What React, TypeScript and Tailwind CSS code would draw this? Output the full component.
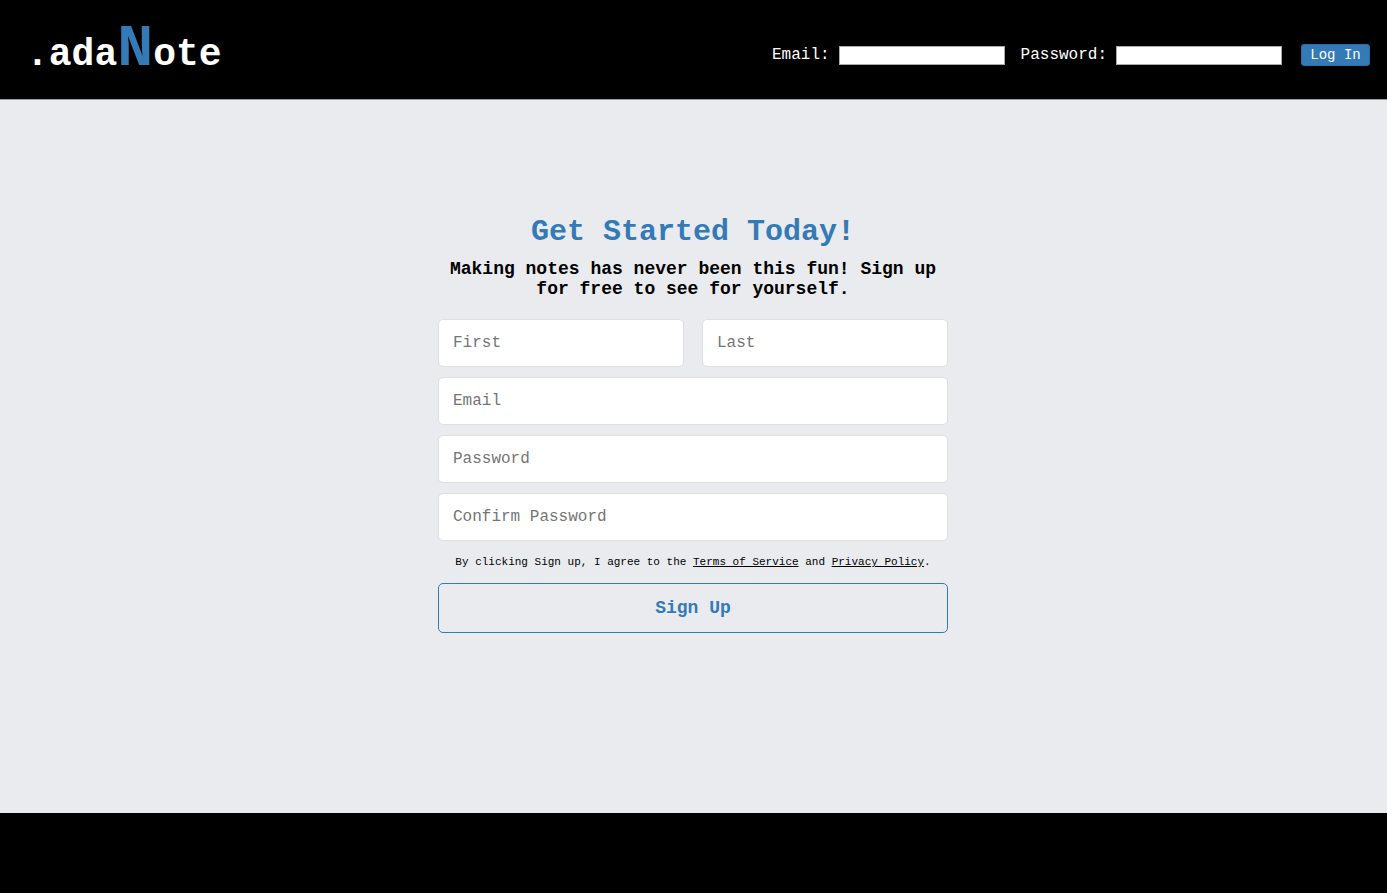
import React from "react";

const fieldClass =
  "h-12 w-full min-w-0 rounded-[5px] border border-[#dddfe2] bg-white px-3.5 text-base text-black placeholder:text-[#757575]";

type FieldProps = { label: string; name: string; type?: string };

function Field({ label, name, type = "text" }: FieldProps) {
  return <input className={fieldClass} type={type} name={name} placeholder={label} aria-label={label} />;
}

function LoginField({ label, name, type }: { label: string; name: string; type: string }) {
  const id = `login-${name}`;
  return (
    <div className="flex items-center gap-[9px]">
      <label htmlFor={id}>{label}</label>
      <input
        id={id}
        name={name}
        type={type}
        className="h-[19px] w-[166px] border border-[#a9a9a9] bg-white px-1 text-sm text-black"
      />
    </div>
  );
}

function Header() {
  return (
    <header className="flex h-[100px] items-center justify-between border-b border-[#9b9b9f] bg-black pt-[11px] pr-[17px] pl-[26px] text-white">
      <a href="#" className="flex items-baseline pb-3 text-[38px] leading-none font-bold">
        <span>.ada</span>
        <span className="text-[60px] leading-none text-[#337ab7]">N</span>
        <span>ote</span>
      </a>
      <form className="flex items-center gap-4" onSubmit={(e) => e.preventDefault()}>
        <LoginField label="Email:" name="email" type="email" />
        <LoginField label="Password:" name="password" type="password" />
        <button
          type="submit"
          className="ml-[3px] h-[22px] w-[69px] rounded-[3px] border border-[#2e6da4] bg-[#337ab7] text-sm leading-5 text-white"
        >
          Log In
        </button>
      </form>
    </header>
  );
}

export default function App() {
  return (
    <div className="flex min-h-screen flex-col bg-[#e9ebee] font-['Courier_New','Liberation_Mono',monospace] text-black">
      <Header />
      <main className="flex flex-1 flex-col items-center pt-[114px] pr-[17px] pb-16 pl-4">
        <section className="w-full max-w-[510px] text-center">
          <h1 className="text-[30px] leading-9 font-bold text-[#337ab7]">Get Started Today!</h1>
          <p className="mt-[9px] text-lg leading-5 font-bold">
            Making notes has never been this fun! Sign up for free to see for yourself.
          </p>
          <form className="mt-5 flex flex-col gap-2.5" onSubmit={(e) => e.preventDefault()}>
            <div className="grid grid-cols-2 gap-[18px]">
              <Field label="First" name="first" />
              <Field label="Last" name="last" />
            </div>
            <Field label="Email" name="email" type="email" />
            <Field label="Password" name="password" type="password" />
            <Field label="Confirm Password" name="confirm" type="password" />
            <p className="py-[3px] text-[11px] leading-4">
              By clicking Sign up, I agree to the{" "}
              <a href="#" className="underline">Terms of Service</a> and{" "}
              <a href="#" className="underline">Privacy Policy</a>.
            </p>
            <button
              type="submit"
              className="h-[50px] w-full rounded-[5px] border border-[#337ab7] text-lg font-bold text-[#337ab7]"
            >
              Sign Up
            </button>
          </form>
        </section>
      </main>
      <footer className="h-20 bg-black" />
    </div>
  );
}
